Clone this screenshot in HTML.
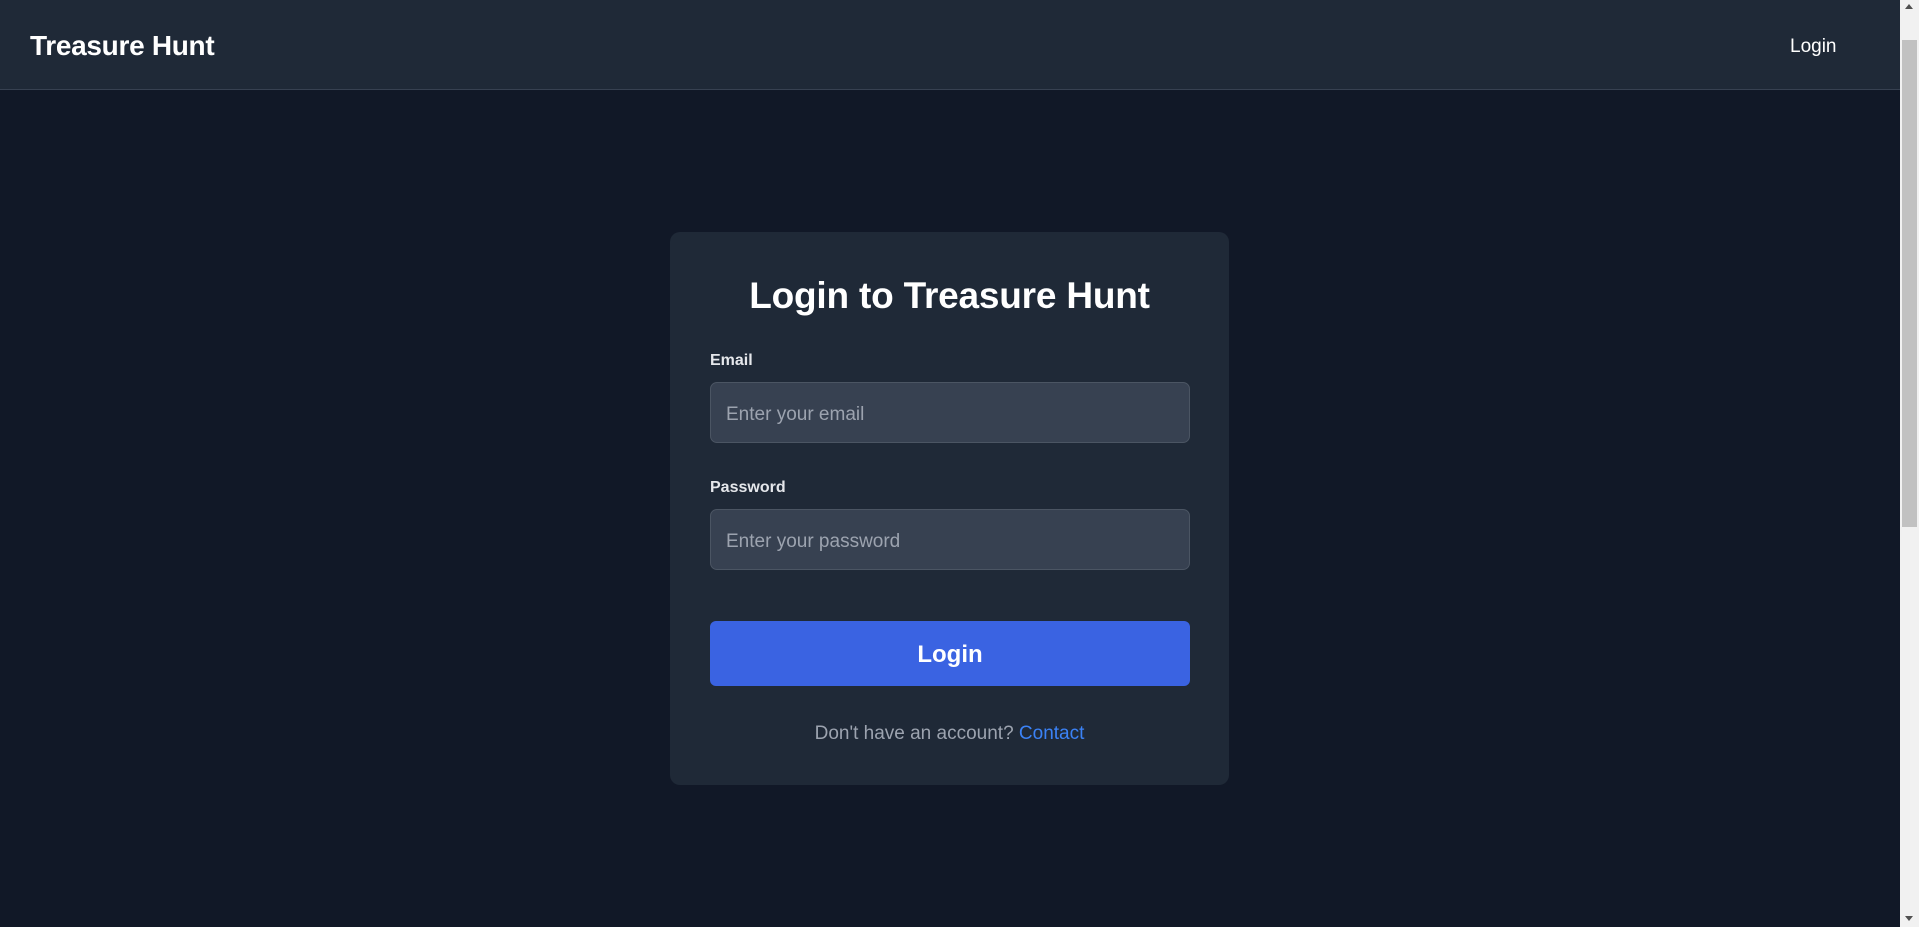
<!DOCTYPE html>
<html><head><meta charset="utf-8"><style>
*{margin:0;padding:0;box-sizing:border-box}
html,body{width:1919px;height:927px;overflow:hidden;background:#111827;font-family:"Liberation Sans","DejaVu Sans",sans-serif;}
.hdr{position:absolute;left:0;top:0;width:1900px;height:90px;background:#1f2937;border-bottom:1px solid #374151}
.brand{position:absolute;left:30px;top:30px;font-size:28px;font-weight:bold;color:#fff;letter-spacing:-0.3px}
.nav{position:absolute;left:1790px;top:36px;font-size:19px;color:#fff}
.sb{position:absolute;left:1900px;top:0;width:19px;height:927px;background:#f1f1f1}
.thumb{position:absolute;left:1902px;top:40px;width:15px;height:487px;background:#c1c1c1}
.arr{position:absolute;left:1905px;width:0;height:0;border-left:4px solid transparent;border-right:4px solid transparent}
.card{position:absolute;left:670px;top:232px;width:559px;height:553px;background:#1f2937;border-radius:10px}
h1{position:absolute;width:559px;top:275px;text-align:center;font-size:37px;font-weight:bold;color:#fff;letter-spacing:-0.2px}
.lbl{position:absolute;left:710px;font-size:16px;font-weight:bold;color:#e5e7eb}
.inp{position:absolute;left:710px;width:480px;height:61px;background:#374151;border:1px solid #4b5563;border-radius:7px;color:#9ca3af;font-size:19px;padding-left:15px;padding-top:2px;line-height:59px}
.btn{position:absolute;left:710px;top:621px;width:480px;height:65px;background:#3a63e2;border-radius:6px;color:#fff;font-size:24px;font-weight:bold;text-align:center;line-height:68px}
.ft{position:absolute;left:670px;width:559px;top:723px;text-align:center;font-size:19px;color:#9ca3af}
.ft span{color:#3b82f6}
</style></head><body>
<div class="hdr"><div class="brand">Treasure Hunt</div><div class="nav">Login</div></div>
<div class="sb"></div><div class="thumb"></div>
<div class="arr" style="top:4px;border-bottom:5px solid #505050"></div>
<div class="arr" style="top:916px;border-top:5px solid #505050"></div>
<div class="card"></div>
<h1 style="left:670px">Login to Treasure Hunt</h1>
<div class="lbl" style="top:352px">Email</div>
<div class="inp" style="top:382px">Enter your email</div>
<div class="lbl" style="top:479px">Password</div>
<div class="inp" style="top:509px">Enter your password</div>
<div class="btn">Login</div>
<div class="ft">Don't have an account? <span>Contact</span></div>
</body></html>
